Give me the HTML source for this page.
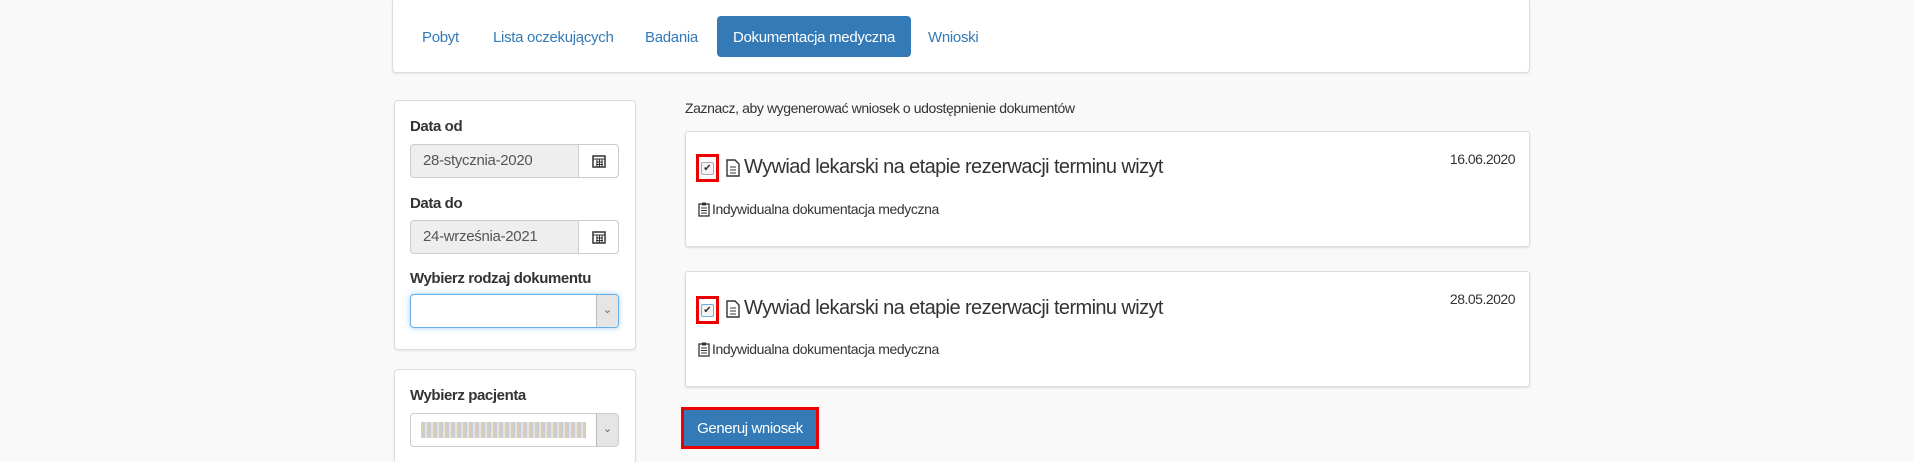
<!DOCTYPE html>
<html><head><meta charset="utf-8"><style>
*{box-sizing:border-box}
html,body{margin:0;width:1914px;height:462px;overflow:hidden}
body{background:#f9f9f9;font-family:"Liberation Sans",sans-serif;color:#333;font-size:15px}
#w{position:relative;width:1914px;height:462px;overflow:hidden}
.a{position:absolute}
.panel{position:absolute;background:#fff;border:1px solid #ddd;border-radius:4px;box-shadow:0 1px 2px rgba(0,0,0,.08)}
.tab{position:absolute;top:17px;height:41px;line-height:41px;color:#337ab7;font-size:15px;letter-spacing:-.3px}
.lbl{position:absolute;left:410px;font-weight:bold;font-size:15px;letter-spacing:-.4px;color:#333}
.inp{position:absolute;left:410px;width:209px;height:34px;border:1px solid #ccc;border-radius:4px;background:#eee;font-size:15px;line-height:32px;padding-left:12px;color:#555;letter-spacing:-.3px}
.inp .ad{position:absolute;right:0;top:0;width:40px;height:32px;background:#fff;border-left:1px solid #ccc;border-radius:0 4px 4px 0;text-align:center}
.sel{position:absolute;left:410px;width:209px;height:34px;border:1px solid #ccc;border-radius:4px;background:#fff}
.sel .ar{position:absolute;right:0;top:0;width:22px;height:32px;background:#e5e5e5;border-left:1px solid #bbb;border-radius:0 3px 3px 0;color:#666;font-size:11px;text-align:center;line-height:30px}
.card{position:absolute;left:685px;width:845px;background:#fff;border:1px solid #ddd;border-radius:3px;box-shadow:0 1px 2px rgba(0,0,0,.12)}
.cb{position:absolute;width:23px;height:28px;border:3px solid #e00}
.cb i{position:absolute;left:2px;top:5px;width:13px;height:13px;border:1px solid #aaa;border-radius:2px;background:#f4f4f4;font-style:normal;font-size:10px;line-height:12px;text-align:center;color:#333}
.title{position:absolute;left:744px;font-size:20px;color:#333;letter-spacing:-.6px}
.date{position:absolute;right:399px;font-size:14px;letter-spacing:-.5px}
.sub{position:absolute;left:698px;font-size:14px;letter-spacing:-.4px}
</style></head><body><div id="w">
<div class="panel" style="left:392px;top:-2px;width:1138px;height:75px"></div>
<div class="tab" style="left:422px">Pobyt</div>
<div class="tab" style="left:493px">Lista oczekujących</div>
<div class="tab" style="left:645px">Badania</div>
<div class="a" style="left:717px;top:16px;width:194px;height:41px;background:#337ab7;border-radius:4px;color:#fff;text-align:center;line-height:43px;font-size:15px;letter-spacing:-.3px">Dokumentacja medyczna</div>
<div class="tab" style="left:928px">Wnioski</div>

<div class="panel" style="left:394px;top:100px;width:242px;height:250px"></div>
<div class="lbl" style="top:118px">Data od</div>
<div class="inp" style="top:144px">28-stycznia-2020<div class="ad"><svg width="14" height="14" viewBox="0 0 14 14" style="margin-top:9px"><rect x="1" y="2" width="12" height="11" fill="none" stroke="#333" stroke-width="1.5"/><path d="M1 5h12M4 8h7M4 10.5h7M5 5v8M7.5 5v8M10 5v8" stroke="#333" stroke-width="1"/></svg></div></div>
<div class="lbl" style="top:195px">Data do</div>
<div class="inp" style="top:220px">24-września-2021<div class="ad"><svg width="14" height="14" viewBox="0 0 14 14" style="margin-top:9px"><rect x="1" y="2" width="12" height="11" fill="none" stroke="#333" stroke-width="1.5"/><path d="M1 5h12M4 8h7M4 10.5h7M5 5v8M7.5 5v8M10 5v8" stroke="#333" stroke-width="1"/></svg></div></div>
<div class="lbl" style="top:270px">Wybierz rodzaj dokumentu</div>
<div class="sel" style="top:294px;border-color:#66afe9;box-shadow:0 0 6px rgba(102,175,233,.6)"><div class="ar">&#8964;</div></div>

<div class="panel" style="left:394px;top:369px;width:242px;height:120px"></div>
<div class="lbl" style="top:387px">Wybierz pacjenta</div>
<div class="sel" style="top:413px"><div class="a" style="left:10px;top:8px;width:165px;height:16px;background:repeating-linear-gradient(90deg,#c9b9a0 0 2px,#a9b8d0 2px 4px,#e0d5c5 4px 6px);opacity:.7"></div><div class="ar">&#8964;</div></div>

<div class="a" style="left:685px;top:100px;font-size:14px;letter-spacing:-.4px">Zaznacz, aby wygenerować wniosek o udostępnienie dokumentów</div>

<div class="card" style="top:131px;height:116px"></div>
<div class="cb" style="left:696px;top:154px"><i>✔</i></div>
<svg class="a" style="left:726px;top:159px" width="14" height="18" viewBox="0 0 14 18"><path d="M1 1h8l4 4v12H1z" fill="none" stroke="#333" stroke-width="1.4"/><path d="M4 8h6M4 11h6M4 14h6" stroke="#333"/></svg>
<div class="title" style="top:156px">Wywiad lekarski na etapie rezerwacji terminu wizyt</div>
<div class="date" style="top:151px">16.06.2020</div>
<svg class="a" style="left:698px;top:202px" width="12" height="15" viewBox="0 0 12 15"><rect x="1" y="2" width="10" height="12" fill="none" stroke="#333" stroke-width="1.3"/><rect x="4" y="0.5" width="4" height="3" fill="#333"/><path d="M3 6h6M3 8.5h6M3 11h6" stroke="#333"/></svg>
<div class="sub" style="left:712px;top:201px">Indywidualna dokumentacja medyczna</div>

<div class="card" style="top:271px;height:116px"></div>
<div class="cb" style="left:696px;top:296px"><i style="border-color:#66afe9">✔</i></div>
<svg class="a" style="left:726px;top:300px" width="14" height="18" viewBox="0 0 14 18"><path d="M1 1h8l4 4v12H1z" fill="none" stroke="#333" stroke-width="1.4"/><path d="M4 8h6M4 11h6M4 14h6" stroke="#333"/></svg>
<div class="title" style="top:297px">Wywiad lekarski na etapie rezerwacji terminu wizyt</div>
<div class="date" style="top:291px">28.05.2020</div>
<svg class="a" style="left:698px;top:342px" width="12" height="15" viewBox="0 0 12 15"><rect x="1" y="2" width="10" height="12" fill="none" stroke="#333" stroke-width="1.3"/><rect x="4" y="0.5" width="4" height="3" fill="#333"/><path d="M3 6h6M3 8.5h6M3 11h6" stroke="#333"/></svg>
<div class="sub" style="left:712px;top:341px">Indywidualna dokumentacja medyczna</div>

<div class="a" style="left:681px;top:407px;width:138px;height:42px;border:3px solid #e00;background:#337ab7;color:#fff;font-size:15px;text-align:center;line-height:37px;letter-spacing:-.4px">Generuj wniosek</div>
</div></body></html>
